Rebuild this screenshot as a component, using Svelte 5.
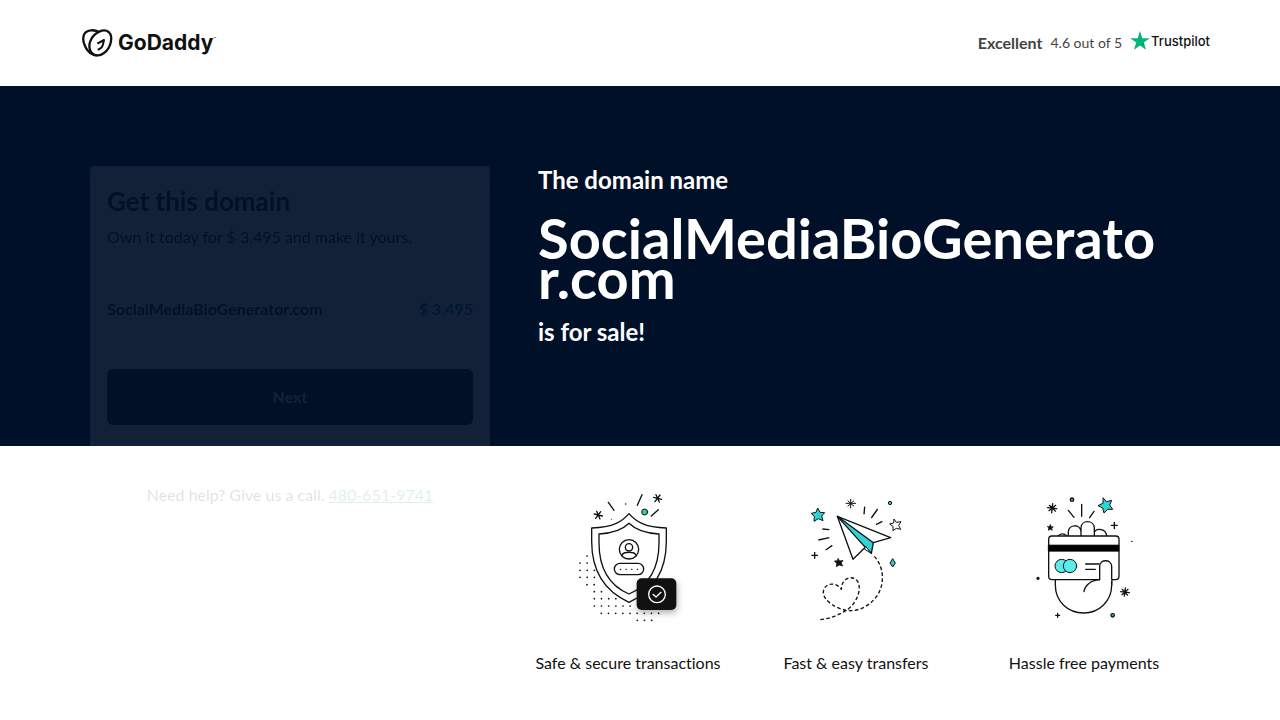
<script>
	const domain = 'SocialMediaBioGenerator.com';
	const price = '$ 3.495';
	const phone = '480-651-9741';

	// rows of the dotted pattern behind the shield: [y, first x, number of dots]
	const dotRows = [
		[228, 66, 1],
		[249, 45, 2],
		[271, 45, 3],
		[292, 45, 3],
		[314, 66, 2],
		[335, 88, 2],
		[356, 88, 4],
		[378, 88, 6],
		[400, 109, 9],
		[421, 217, 3]
	];

	const dots = dotRows.flatMap(([y, x, count]) =>
		Array.from({ length: count }, (_, i) => ({ x: x + i * 21.5, y }))
	);
</script>

<svelte:head>
	<title>{domain} is for sale</title>
</svelte:head>

<header>
	<div class="header-inner">
		<a class="logo" href="#home" aria-label="GoDaddy">
			<svg width="32" height="32" viewBox="36 36 96 96" fill="none" stroke="#111" stroke-width="7" stroke-linejoin="round">
				<path d="M81 121C59 119 52 93 64 72C76 50 102 40 116 51C132 66 121 101 102 114C95 119 88 122 81 121Z" />
				<path d="M88 52C74 43 51 43 43 57C33 76 48 108 66 117C71 120 76 121 81 121" />
				<path d="M82 86L102 75L99 88C97 97 92 102 83 104" stroke-width="6" />
			</svg>
			<span class="wordmark">GoDaddy</span><span class="tm">™</span>
		</a>
		<a class="rating" href="#reviews">
			<strong>Excellent</strong>
			<span class="score">4.6 out of 5</span>
			<span class="trustpilot">
				<svg width="20" height="20" viewBox="0 0 20 20">
					<path fill="#00b67a" d="M10 0l2.300 7.200h7.500l-6 4.400 2.300 7.200L10 14.400l-6.100 4.400 2.300-7.200-6-4.400h7.500z" />
					<path fill="#00955f" d="M14.300 13.200l-.5-1.600L10 14.400z" />
				</svg>
				<span>Trustpilot</span>
			</span>
		</a>
	</div>
</header>

<main>
	<div class="band"></div>

	<aside>
		<form class="card" onsubmit={(e) => e.preventDefault()}>
			<h2>Get this domain</h2>
			<p>Own it today for {price} and make it yours.</p>
			<div class="item">
				<strong>{domain}</strong>
				<span class="price">{price}</span>
			</div>
			<button type="submit">Next</button>
		</form>
		<p class="help">Need help? Give us a call. <a href="tel:{phone}">{phone}</a></p>
	</aside>

	<section class="intro">
		<p>The domain name</p>
		<h1>{domain}</h1>
		<p>is for sale!</p>
	</section>

	<section class="features">
		<figure>
			<svg class="art" viewBox="-6 0 390 450" fill="none" stroke="#111" stroke-width="4" stroke-linecap="round" stroke-linejoin="round">
				<g fill="#111" stroke="none">
					{#each dots as dot}
						<circle cx={dot.x} cy={dot.y} r="2.600" />
					{/each}
					<circle cx="182" cy="72" r="2.500" />
					<circle cx="139" cy="118" r="1.500" />
				</g>
				<path fill="#fff" d="M192 101C173 123 146 143 80 144V184C80 272 119 334 192 367C265 334 304 272 304 184V144C238 143 211 123 192 101Z" />
				<path d="M192 130C173 149 148 160 102 162V188C102 264 132 316 192 342C252 316 282 264 282 188V162C236 160 211 149 192 130Z" />
				<circle cx="192" cy="208" r="29" />
				<circle cx="192" cy="202" r="11" />
				<path d="M170 227C174 217 182 217 192 217S210 217 214 227" />
				<rect x="148" y="250" width="88" height="34" rx="17" />
				<path d="M166 268h1M183 268h1M200 268h1M217 268h1" />
				<path d="M130 67L147 91M231 44L217 76M280 89L259 108" />
				<path d="M88 102L112 108M95 94L105 117M107 95L92 115M266 52L290 58M273 44L283 66M285 45L270 65" />
				<circle cx="239" cy="96" r="9" fill="#2fc9b4" stroke-width="3" />
				<rect class="shade" x="215" y="295" width="119" height="95" rx="15" fill="#111" stroke="none" />
				<circle cx="276" cy="343" r="25" stroke="#fff" />
				<path d="M264 343l9 8 15-14" stroke="#fff" />
			</svg>
			<figcaption>Safe &amp; secure transactions</figcaption>
		</figure>

		<figure>
			<svg class="art" viewBox="-12 -15 390 450" fill="none" stroke="#111" stroke-width="4" stroke-linejoin="round">
				<path d="M127 94L287 158L235 173L214 184L174 223Z" fill="#fff" />
				<path d="M127 94L235 173L229 205L211 187Z" fill="#2fd5d5" />
				<path d="M211 183L229 205L209 193Z" fill="#fff" stroke-width="3" />
				<path d="M209 65L207 88M248 72L229 99M262 109L243 119M82 132L103 134M70 165L103 158M112 181L92 195" />
				<path d="M59 201V221M49 211H69" />
				<path stroke-width="3" d="M167 42V70M152 55H183M158 47L177 64M177 47L158 64" />
				<path fill="#2fd5d5" stroke-width="3" d="M68 69L75 82L89 83L80 93L84 107L70 101L57 109L58 95L49 85L63 82Z" />
				<path fill="#111" stroke-width="2" d="M129 220L134 228L144 226L139 234L143 243L133 240L124 245L125 235L118 228L127 227Z" />
				<path stroke-width="3" d="M297 102L304 112L318 110L311 121L317 133L304 130L294 137L294 124L284 117L296 114Z" />
				<path fill="#2fc9b4" stroke-width="3" d="M293 221L301 234L293 246L285 234Z" />
				<circle cx="285" cy="54" r="5" fill="#2fc9b4" stroke-width="3" />
				<path stroke-dasharray="11 7" d="M238 214C268 247 270 299 245 334C222 365 188 381 154 376C119 369 86 346 85 323C85 295 121 287 139 313C139 277 174 269 188 289C203 317 180 360 154 376C132 389 109 400 76 404" />
			</svg>
			<figcaption>Fast &amp; easy transfers</figcaption>
		</figure>

		<figure>
			<svg class="art" viewBox="-18 -15 390 450" fill="none" stroke="#111" stroke-width="4" stroke-linecap="round" stroke-linejoin="round">
				<path d="M101 152C106 145 118 145 124 152M130 152V140C132 117 166 116 168 140V152M168 152V128C169 104 206 104 208 128V152M208 141C216 128 243 131 245 152" />
				<path d="M91 284V300C91 350 129 384 176 384S260 348 260 300V284" />
				<rect x="71" y="153" width="211" height="131" rx="10" fill="#fff" />
				<path d="M71 180H282V199H71Z" fill="#000" stroke-width="2" />
				<circle cx="110" cy="243" r="20" fill="#5cebe6" stroke-width="3" />
				<circle cx="135" cy="243" r="20" fill="#5cebe6" stroke-width="3" />
				<path d="M182 237H222M182 253H211" />
				<path d="M224 284V243C225 222 258 222 260 243V300" fill="#fff" />
				<path d="M224 284C196 286 179 302 177 320" />
				<path d="M227 286H257" stroke="#fff" stroke-width="5" />
				<path d="M130 76L147 97M170 58V94M207 79L194 98" />
				<path d="M268 112V131M259 121H277M98 385V397M92 391H104" />
				<path d="M83 56L80 83M68 68L95 71M73 61L91 78M92 61L72 77M301 309L298 333M287 320L313 323M292 313L307 330M309 313L291 329" />
				<path fill="#2fd5d5" stroke-width="3" d="M235 39L244 50L260 46L254 60L263 73L247 73L237 84L233 69L219 62L233 55Z" />
				<path fill="#111" stroke-width="2" d="M76 119L79 125L85 126L80 130L82 136L76 133L70 136L71 129L67 124L73 125Z" />
				<circle cx="141" cy="44" r="5" fill="#2fc9b4" />
				<circle cx="263" cy="391" r="5" fill="#2fc9b4" />
				<circle cx="39" cy="280" r="3" fill="#111" />
				<circle cx="320" cy="169" r="1" stroke-width="2" />
			</svg>
			<figcaption>Hassle free payments</figcaption>
		</figure>
	</section>
</main>

<style>
	:global(body) {
		margin: 0;
		background: #fff;
		color: #111;
		font-family: Lato, "Liberation Sans", sans-serif;
		font-size: 16px;
		font-variant-ligatures: none;
		line-height: 24px;
	}

	h1, h2, p, figure {
		margin: 0;
	}

	.header-inner {
		display: flex;
		align-items: center;
		justify-content: space-between;
		box-sizing: border-box;
		max-width: 1140px;
		min-height: 86px;
		margin: 0 auto;
		padding-left: 12px;
	}

	.logo, .rating, .trustpilot {
		display: flex;
		align-items: center;
		color: #111;
		text-decoration: none;
	}

	.wordmark {
		margin-left: 4px;
		font-family: Inter, sans-serif;
		font-size: 21px;
		font-weight: 700;
	}

	.tm {
		align-self: flex-start;
		font-size: 4px;
	}

	.rating {
		gap: 8px;
		color: #444;
	}

	.score {
		font-size: 14px;
	}

	.trustpilot {
		gap: 1px;
		padding-bottom: 4px;
		font-family: Inter, "Liberation Sans", sans-serif;
		font-size: 13px;
		font-weight: 500;
	}

	main {
		display: grid;
		grid-template-columns: minmax(16px, 1fr) 432px minmax(0, 684px) minmax(16px, 1fr);
		grid-template-rows: minmax(360px, auto) auto;
	}

	.band {
		grid-area: 1 / 1 / 2 / -1;
		background: #001029;
	}

	aside {
		grid-area: 1 / 2 / 3 / 3;
		padding: 80px 24px 0 8px;
	}

	.card {
		padding: 19px 17px 24px;
		border-radius: 4px;
		background: #fff;
		box-shadow: 0 8px 24px rgba(0, 0, 0, 0.15);
		opacity: 0.07;
	}

	h2 {
		margin-bottom: 8px;
		font-size: 26px;
		line-height: 32px;
	}

	.item {
		display: flex;
		justify-content: space-between;
		padding: 48px 0;
	}

	.price {
		color: #09757a;
		font-weight: 700;
	}

	button {
		width: 100%;
		height: 56px;
		border: 0;
		border-radius: 6px;
		background: #111;
		color: #fff;
		font: inherit;
		font-weight: 700;
	}

	.help {
		margin-top: 34px;
		text-align: center;
		opacity: 0.12;
	}

	.help a {
		color: #09757a;
	}

	.intro {
		grid-area: 1 / 3 / 2 / 4;
		padding: 80px 24px;
		color: #fff;
	}

	.intro p {
		font-size: 24px;
		font-weight: 700;
		line-height: 28px;
	}

	h1 {
		margin: 24px 0 20px;
		font-size: 56px;
		line-height: 40px;
		overflow-wrap: anywhere;
	}

	.features {
		grid-area: 2 / 3 / 3 / 4;
		display: grid;
		grid-template-columns: repeat(3, 1fr);
		padding: 34px 0;
	}

	figure {
		display: flex;
		flex-direction: column;
		align-items: center;
		gap: 21px;
	}

	.art {
		width: 130px;
		height: 150px;
	}

	.shade {
		filter: drop-shadow(3px 9px 10px rgba(0, 0, 0, 0.3));
	}

	@media (max-width: 1000px) {
		main {
			grid-template-columns: 16px minmax(0, 1fr) 16px;
		}

		.band, .intro {
			grid-area: 1 / 1 / 2 / -1;
		}

		aside {
			grid-area: 2 / 2 / 3 / 3;
		}

		.features {
			grid-area: 3 / 2 / 4 / 3;
		}
	}
</style>
